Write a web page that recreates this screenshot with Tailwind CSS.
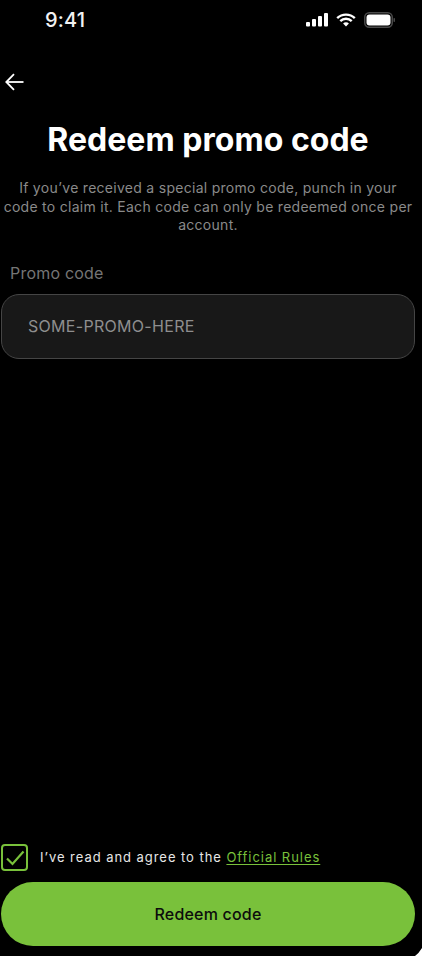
<!DOCTYPE html>
<html lang="en">
<head>
    <meta charset="UTF-8">
    <meta name="viewport" content="width=device-width, initial-scale=1.0">
    <title>Redeem promo code</title>
    <script src="https://cdn.jsdelivr.net/npm/@tailwindcss/browser@4"></script>
</head>
<body class="relative bg-black text-white font-['Inter',sans-serif] h-[956px] w-[422px] overflow-hidden">
    <div class="flex flex-col h-full w-[415px] pl-px">
        <!-- status bar -->
        <div class="flex items-center justify-between h-[40px] pl-[44px] pr-[20px] shrink-0">
            <span class="text-[20px] font-medium leading-[40px] tracking-[0.2px] text-[#f2f2f2]">9:41</span>
            <div class="flex items-center gap-[8px]">
                <svg width="22" height="14" viewBox="0 0 22 14" fill="#fff">
                    <rect x="0" y="9" width="4" height="4.500" rx="1"/>
                    <rect x="6" y="6" width="4" height="7.500" rx="1"/>
                    <rect x="12" y="3" width="4" height="10.500" rx="1"/>
                    <rect x="18" y="0" width="4" height="13.500" rx="1"/>
                </svg>
                <svg width="20" height="14" viewBox="0 0 20 14" fill="none" stroke="#fff" stroke-width="2.400">
                    <path d="M1.200 5.200a12.500 12.500 0 0 1 17.600 0"/>
                    <path d="M4.300 8.200a8 8 0 0 1 11.400 0"/>
                    <path d="M10 13.500l-2.900-2.900a4 4 0 0 1 5.800 0z" fill="#fff" stroke="none"/>
                </svg>
                <svg width="31" height="16" viewBox="0 0 31 16" fill="none">
                    <rect x="0.750" y="0.750" width="27.500" height="14.500" rx="4.500" stroke="#4a4a4a" stroke-width="1.500"/>
                    <rect x="2.500" y="2.500" width="24" height="11" rx="3" fill="#fff"/>
                    <rect x="29.500" y="6" width="1.500" height="4" rx="0.700" fill="#4a4a4a"/>
                </svg>
            </div>
        </div>

        <!-- back -->
        <div class="mt-[30px] ml-[4px] h-[24px] flex items-center shrink-0">
            <svg width="19" height="18" viewBox="0 0 19 18" fill="none" stroke="#fff" stroke-width="1.800">
                <path d="M18.500 9H1.500"/>
                <path d="M9 1.200L1.300 9L9 16.800"/>
            </svg>
        </div>

        <h1 class="mt-[28px] text-center text-[32px] font-bold leading-[36px] tracking-[0.03px] shrink-0">Redeem promo code</h1>

        <p class="mt-[21px] text-center text-[14px] leading-[18.500px] tracking-[0.28px] text-[#8a8a8a] shrink-0">If you’ve received a special promo code, punch in your code to claim it. Each code can only be redeemed once per account.</p>

        <label class="mt-[28px] pl-[9px] text-[16px] leading-[20px] tracking-[0.2px] text-[#757575] shrink-0">Promo code</label>
        <div class="mt-[11px] h-[65px] flex items-center pl-[26px] bg-[#181818] border border-[#454545] rounded-[18px] text-[16px] tracking-[0.3px] text-[#8e8e8e] shrink-0">SOME-PROMO-HERE</div>

        <!-- bottom part -->
        <div class="mt-auto flex items-center gap-[12px]">
            <div class="w-[27px] h-[27px] border-2 border-[#79c13b] rounded-[4px] flex items-center justify-center">
                <svg width="20" height="16" viewBox="0 0 20 16" fill="none" stroke="#79c13b" stroke-width="2.200">
                    <path d="M2 8.500L7.500 14L18.500 1.500"/>
                </svg>
            </div>
            <span class="text-[13px] tracking-[0.95px] text-[#e6e6e6]">I’ve read and agree to the <a class="text-[#79c13b] underline underline-offset-2">Official Rules</a></span>
        </div>
        <button class="mt-[11px] mb-[10px] h-[64px] shrink-0 rounded-full bg-[#79c13b] text-[#0c0c0c] text-[16px] font-medium tracking-[0.2px]">Redeem code</button>
    </div>
    <!-- white corner behind the phone frame -->
    <svg class="absolute right-0 bottom-0" width="7" height="8" viewBox="0 0 7 8" fill="#fff">
        <path d="M7 0V8H0Q4 5 7 0z"/>
    </svg>
</body>
</html>
